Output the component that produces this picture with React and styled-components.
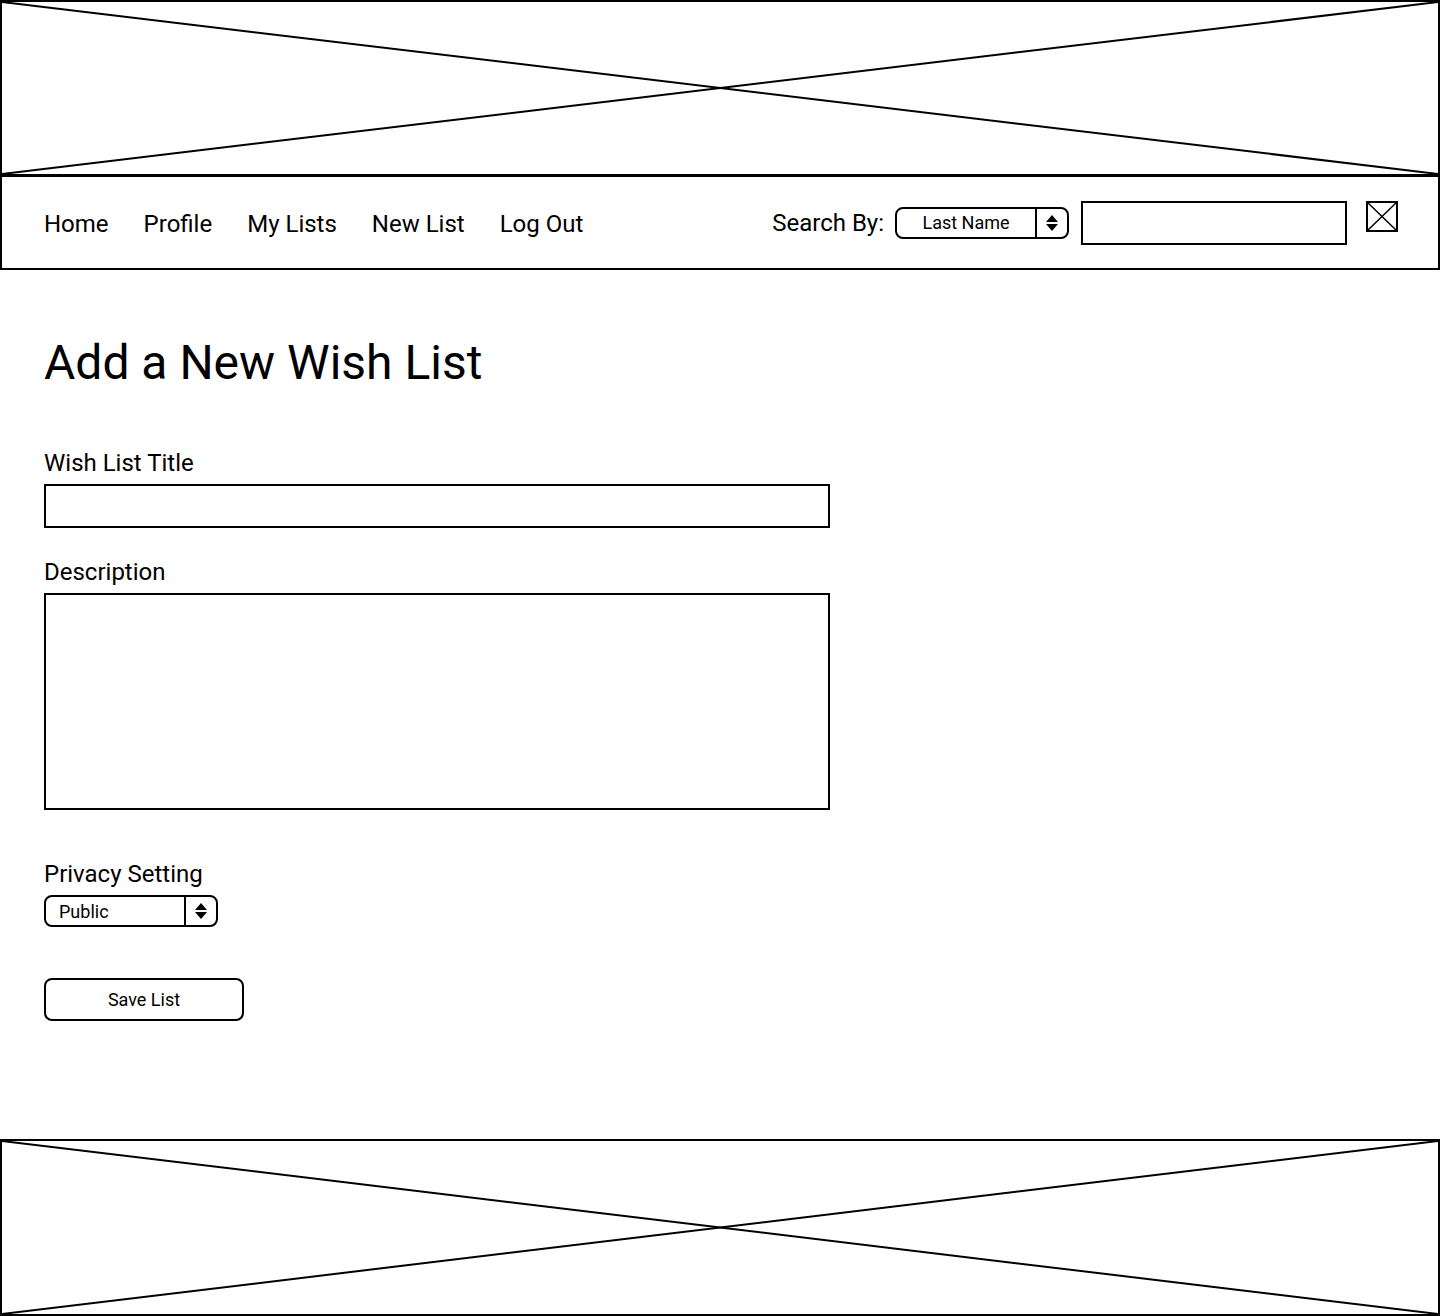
import React from "react";
import styled, { createGlobalStyle } from "styled-components";

const GlobalStyle = createGlobalStyle`
  * { box-sizing: border-box; }
  body {
    margin: 0;
    font-family: Roboto, "Liberation Sans", sans-serif;
    color: #000;
    background: #fff;
  }
`;

function Placeholder({ className }) {
  return (
    <PlaceholderBox className={className}>
      <svg width="100%" height="100%" preserveAspectRatio="none" viewBox="0 0 100 100">
        <line x1="0" y1="0" x2="100" y2="100" stroke="#000" strokeWidth="2" vectorEffect="non-scaling-stroke" />
        <line x1="100" y1="0" x2="0" y2="100" stroke="#000" strokeWidth="2" vectorEffect="non-scaling-stroke" />
      </svg>
    </PlaceholderBox>
  );
}

function SelectArrows() {
  return (
    <svg width="14" height="18" viewBox="0 0 14 18">
      <polygon points="7,1 13,8 1,8" fill="#000" />
      <polygon points="1,10 13,10 7,17" fill="#000" />
    </svg>
  );
}

function Select({ value, width, centered }) {
  return (
    <SelectBox $width={width}>
      <SelectValue $centered={centered}>{value}</SelectValue>
      <SelectArrow>
        <SelectArrows />
      </SelectArrow>
    </SelectBox>
  );
}

const navLinks = ["Home", "Profile", "My Lists", "New List", "Log Out"];

export default function App() {
  return (
    <>
      <GlobalStyle />
      <Page>
        <Banner />
        <Nav>
          <NavLinks>
            {navLinks.map((link) => (
              <NavLink key={link}>{link}</NavLink>
            ))}
          </NavLinks>
          <Search>
            <SearchLabel>Search By:</SearchLabel>
            <Select value="Last Name" width={174} centered />
            <SearchInput />
            <SearchIcon>
              <svg width="32" height="31" viewBox="0 0 32 31">
                <rect x="1" y="1" width="30" height="29" fill="none" stroke="#000" strokeWidth="2" />
                <line x1="1" y1="1" x2="31" y2="30" stroke="#000" strokeWidth="1.5" />
                <line x1="31" y1="1" x2="1" y2="30" stroke="#000" strokeWidth="1.5" />
              </svg>
            </SearchIcon>
          </Search>
        </Nav>
        <Main>
          <Heading>Add a New Wish List</Heading>
          <Field $gap={58}>
            <Label>Wish List Title</Label>
            <TextInput />
          </Field>
          <Field $gap={30}>
            <Label>Description</Label>
            <TextArea />
          </Field>
          <Field $gap={50}>
            <Label>Privacy Setting</Label>
            <Select value="Public" width={174} />
          </Field>
          <SaveButton>Save List</SaveButton>
        </Main>
        <Footer />
      </Page>
    </>
  );
}

const Page = styled.div`
  display: flex;
  flex-direction: column;
  min-height: 1316px;
`;

const PlaceholderBox = styled.div`
  border: 2px solid #000;
  svg {
    display: block;
  }
`;

const Banner = styled(Placeholder)`
  height: 176px;
`;

const Footer = styled(Placeholder)`
  height: 177px;
  margin-top: auto;
`;

const Nav = styled.nav`
  height: 95px;
  border: 2px solid #000;
  margin-top: -1px;
  display: flex;
  align-items: center;
  justify-content: space-between;
  padding: 0 40px 0 42px;
`;

const NavLinks = styled.div`
  display: flex;
  gap: 35px;
  margin-top: 2px;
`;

const NavLink = styled.a`
  font-size: 24px;
  cursor: pointer;
`;

const Search = styled.div`
  display: flex;
  align-items: center;
`;

const SearchLabel = styled.span`
  font-size: 24px;
  margin-right: 11px;
`;

const SelectBox = styled.div`
  width: ${(p) => p.$width}px;
  height: 32px;
  border: 2px solid #000;
  border-radius: 8px;
  display: flex;
  align-items: stretch;
`;

const SelectValue = styled.div`
  flex: 1;
  display: flex;
  align-items: center;
  justify-content: ${(p) => (p.$centered ? "center" : "flex-start")};
  padding-left: ${(p) => (p.$centered ? "0" : "13px")};
  font-size: 18px;
  border-right: 2px solid #000;
`;

const SelectArrow = styled.div`
  width: 30px;
  display: flex;
  align-items: center;
  justify-content: center;
`;

const SearchInput = styled.div`
  width: 266px;
  height: 44px;
  border: 2px solid #000;
  margin-left: 12px;
`;

const SearchIcon = styled.div`
  margin-left: 19px;
  margin-top: -12px;
  svg {
    display: block;
  }
`;

const Main = styled.main`
  padding: 65px 44px 0;
  display: flex;
  flex-direction: column;
  align-items: flex-start;
`;

const Heading = styled.h1`
  margin: 0;
  font-size: 48px;
  font-weight: 400;
  line-height: 56px;
`;

const Field = styled.div`
  display: flex;
  flex-direction: column;
  align-items: flex-start;
  gap: 7px;
  margin-top: ${(p) => p.$gap}px;
`;

const Label = styled.label`
  font-size: 24px;
  line-height: 28px;
`;

const TextInput = styled.div`
  width: 786px;
  height: 44px;
  border: 2px solid #000;
`;

const TextArea = styled.div`
  width: 786px;
  height: 217px;
  border: 2px solid #000;
`;

const SaveButton = styled.button`
  margin-top: 51px;
  width: 200px;
  height: 43px;
  border: 2px solid #000;
  border-radius: 8px;
  background: #fff;
  font-family: Roboto, "Liberation Sans", sans-serif;
  font-size: 18px;
  color: #000;
  padding: 0;
`;
